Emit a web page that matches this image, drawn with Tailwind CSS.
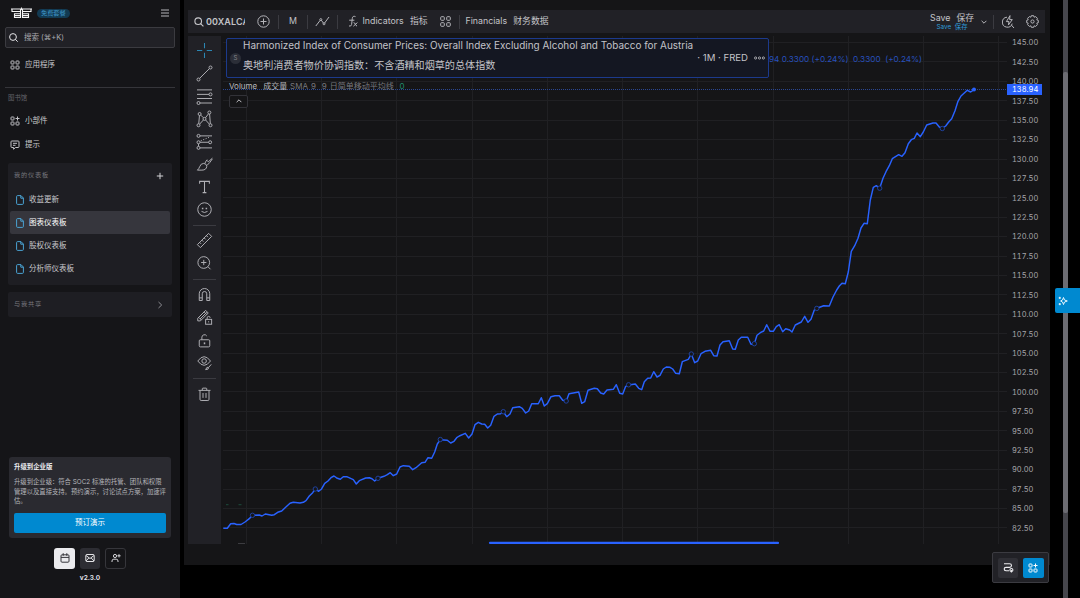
<!DOCTYPE html>
<html lang="zh-CN">
<head>
  <meta charset="UTF-8" />
  <meta name="viewport" content="width=device-width, initial-scale=1.0" />
  <title>图表仪表板</title>
  <script src="https://cdn.jsdelivr.net/npm/@tailwindcss/browser@4"></script>
  <style>
    body {
      font-family: Inter, 'Noto Sans CJK SC', sans-serif;
    }
  </style>
</head>
<body class="relative flex w-[1080px] h-[598px] overflow-hidden bg-black text-[#c9c9cd]">

  <!-- Sidebar -->
  <aside class="flex flex-col shrink-0 w-[180px] h-full bg-[#151518] text-[7.5px] leading-none">
    <div class="flex items-center h-[26px] pl-[11px] pr-[10px]">
      <svg class="w-[21px] h-[12px]" viewBox="0 0 21 12" fill="none" stroke="#f4f4f5" stroke-width="1.1">
        <path d="M0 2H9.5V4.500H1V2M9.500 6.700H3.500V10.500H9.500V6.700M3.500 8.600H9.500M21 2H11.500V4.500H20V2M11.500 6.700H17.500V10.500H11.500V6.700M17.500 8.600H11.500M9.500 4.500V6.700M11.500 4.500V6.700M10.500 .5V3" />
      </svg>
      <span class="flex items-center h-[9px] ml-[5px] px-[4px] rounded-full bg-[#123a52] text-[#3f97c9] text-[6.2px]">免费套餐</span>
      <svg class="w-[10px] h-[8px] ml-auto" viewBox="0 0 10 8" stroke="#b5b5b9" stroke-width="1"><path d="M1 1H9M1 4H9M1 7H9" /></svg>
    </div>

    <div class="flex items-center gap-[6px] h-[21px] mt-[1px] mx-[5px] pl-[3px] rounded-[2px] border border-[#3b3b40] bg-[#212126] text-[#a9a9ae]">
      <svg class="w-[9px] h-[9px]" viewBox="0 0 9 9" fill="none" stroke="#e4e4e7" stroke-width="1"><circle cx="4" cy="4" r="3.4" /><path d="M6.5 6.5L8.7 8.7" /></svg>
      <span>搜索 (⌘+K)</span>
    </div>

    <a class="flex items-center gap-[5px] h-[33px] pl-[10px]">
      <svg class="w-[10px] h-[10px]" viewBox="0 0 10 10" fill="none" stroke="#c4c4c8" stroke-width="1"><rect x="1" y="1" width="3" height="3" rx=".6" /><rect x="6" y="1" width="3" height="3" rx=".6" /><rect x="1" y="6" width="3" height="3" rx=".6" /><rect x="6" y="6" width="3" height="3" rx=".6" /></svg>
      <span>应用程序</span>
    </a>

    <div class="h-px mt-[6px] mx-[5px] bg-[#35353a]"></div>
    <div class="flex items-center h-[21px] pl-[8px] text-[6.4px] text-[#626268]">图书馆</div>

    <a class="flex items-center gap-[5px] h-[24px] pl-[10px]">
      <svg class="w-[10px] h-[10px]" viewBox="0 0 10 10" fill="none" stroke="#c4c4c8" stroke-width="1"><rect x="1" y="1" width="3" height="3" rx=".6" /><path d="M7.5 .5V4.5M5.5 2.5H9.5" /><rect x="1" y="6" width="3" height="3" rx=".6" /><rect x="6" y="6" width="3" height="3" rx=".6" /></svg>
      <span>小部件</span>
    </a>
    <a class="flex items-center gap-[5px] h-[24px] pl-[10px]">
      <svg class="w-[10px] h-[10px]" viewBox="0 0 10 10" fill="none" stroke="#c4c4c8" stroke-width="1"><path d="M1.8 1H8.2Q9 1 9 1.8V6.7Q9 7.5 8.2 7.5H5.5L3.6 9.2V7.5H1.8Q1 7.5 1 6.7V1.8Q1 1 1.8 1ZM3 3.3H7M3 5.3H5.5" /></svg>
      <span>提示</span>
    </a>

    <!-- My dashboards -->
    <div class="mt-[6px] mx-[8px] px-[2px] pb-[5px] rounded-[2px] bg-[#1e1e23]">
      <div class="flex items-center justify-between h-[25px] pl-[4px] pr-[6px] text-[6.2px] text-[#77777d] tracking-[.8px]">
        <span>我的仪表板</span>
        <svg class="w-[8px] h-[8px]" viewBox="0 0 8 8" stroke="#d4d4d8" stroke-width="1"><path d="M4 .8V7.2M.8 4H7.2" /></svg>
      </div>
      <a class="flex items-center gap-[5px] h-[23px] pl-[6px] rounded-[2px]">
        <svg class="w-[8px] h-[10px]" viewBox="0 0 8 10" fill="none" stroke="#4aa3d3" stroke-width="1"><path d="M5 .6H1.6Q.6 .6 .6 1.6V8.4Q.6 9.4 1.6 9.4H6.4Q7.4 9.4 7.4 8.4V3ZM4.8 .8V3.2H7.2" /></svg>
        <span>收益更新</span>
      </a>
      <a class="flex items-center gap-[5px] h-[23px] pl-[6px] rounded-[2px] bg-[#36363d] text-white">
        <svg class="w-[8px] h-[10px]" viewBox="0 0 8 10" fill="none" stroke="#4aa3d3" stroke-width="1"><path d="M5 .6H1.6Q.6 .6 .6 1.6V8.4Q.6 9.4 1.6 9.4H6.4Q7.4 9.4 7.4 8.4V3ZM4.8 .8V3.2H7.2" /></svg>
        <span>图表仪表板</span>
      </a>
      <a class="flex items-center gap-[5px] h-[23px] pl-[6px] rounded-[2px]">
        <svg class="w-[8px] h-[10px]" viewBox="0 0 8 10" fill="none" stroke="#4aa3d3" stroke-width="1"><path d="M5 .6H1.6Q.6 .6 .6 1.6V8.4Q.6 9.4 1.6 9.4H6.4Q7.4 9.4 7.4 8.4V3ZM4.8 .8V3.2H7.2" /></svg>
        <span>股权仪表板</span>
      </a>
      <a class="flex items-center gap-[5px] h-[23px] pl-[6px] rounded-[2px]">
        <svg class="w-[8px] h-[10px]" viewBox="0 0 8 10" fill="none" stroke="#4aa3d3" stroke-width="1"><path d="M5 .6H1.6Q.6 .6 .6 1.6V8.4Q.6 9.4 1.6 9.4H6.4Q7.4 9.4 7.4 8.4V3ZM4.8 .8V3.2H7.2" /></svg>
        <span>分析师仪表板</span>
      </a>
    </div>

    <div class="flex items-center justify-between h-[25px] mt-[7px] mx-[8px] pl-[6px] pr-[9px] rounded-[2px] bg-[#1e1e23] text-[6.2px] text-[#77777d] tracking-[.8px]">
      <span>与我共享</span>
      <svg class="w-[6px] h-[8px]" viewBox="0 0 6 8" fill="none" stroke="#8e8e94" stroke-width="1"><path d="M1.5 1L4.7 4L1.5 7" /></svg>
    </div>

    <!-- Upgrade card -->
    <div class="mt-auto mx-[9px] px-[5px] pt-[5px] pb-[5px] h-[81px] rounded-[3px] bg-[#2a2a30]">
      <div class="h-[10px] text-[6.4px] leading-[10px] font-bold text-[#ededf0]">升级到企业版</div>
      <p class="mt-[6px] h-[29px] text-[6.34px] leading-[9.5px] text-[#b4b4b9] whitespace-nowrap">升级到企业级：符合 SOC2 标准的托管、团队和权限<br />管理以及直接支持。预约演示，讨论试点方案，加速评<br />估。</p>
      <button class="flex items-center justify-center w-full h-[20px] mt-[6px] rounded-[2px] bg-[#0089d0] text-[7.5px] text-white">预订演示</button>
    </div>

    <div class="flex justify-center gap-[5px] mt-[10px]">
      <button class="flex items-center justify-center w-[20.5px] h-[20.5px] rounded-[3px] bg-[#ebebee]">
        <svg class="w-[10px] h-[10px]" viewBox="0 0 10 10" fill="none" stroke="#35353a" stroke-width="1"><rect x="1" y="1.8" width="8" height="7.4" rx="1" /><path d="M1 4.4H9M3.2 .2V2.8M6.8 .2V2.8" /></svg>
      </button>
      <button class="flex items-center justify-center w-[20.5px] h-[20.5px] rounded-[3px] bg-[#2d2d33]">
        <svg class="w-[10px] h-[10px]" viewBox="0 0 10 10" fill="none" stroke="#e4e4e7" stroke-width="1"><rect x=".8" y="1.5" width="8.4" height="7" rx="1" /><path d="M1 2.5L5 5.5L9 2.5M1 8L3.8 5M9 8L6.2 5" /></svg>
      </button>
      <button class="flex items-center justify-center w-[20.5px] h-[20.5px] rounded-[3px] border border-[#36363b]">
        <svg class="w-[10px] h-[10px]" viewBox="0 0 10 10" fill="none" stroke="#d4d4d8" stroke-width="1"><circle cx="4" cy="3" r="1.6" /><path d="M1 9V8Q1 6.2 2.8 6.2H5.2Q7 6.2 7 8V9M8 1.2V4.4M6.4 2.8H9.6" /></svg>
      </button>
    </div>
    <div class="h-[29.5px] pt-[6.5px] text-center text-[6.5px] font-bold text-[#dedee2]">v2.3.0</div>
  </aside>

  <!-- Chart widget -->
  <main class="flex flex-col shrink-0 w-[866px] h-[565px] ml-[4px] pt-[10px] pl-[4px] pr-[5px] bg-[#151517]">

    <!-- Top toolbar -->
    <div class="flex items-center shrink-0 h-[23px] pl-[6px] pr-[6px] bg-[#212126] text-[8.8px] leading-none text-[#c3c3c8] whitespace-nowrap">
      <svg class="w-[10px] h-[10px] shrink-0" viewBox="0 0 10 10" fill="none" stroke="#c8c8cc" stroke-width="1.1"><circle cx="4.2" cy="4.2" r="3.3" /><path d="M6.6 6.6L9.4 9.4" /></svg>
      <span class="w-[39px] ml-[2px] overflow-hidden font-semibold text-[9px] tracking-[.1px] leading-[12px]">00XALCA</span>
      <svg class="w-[13px] h-[13px] ml-[11.500px]" viewBox="0 0 13 13" fill="none" stroke="#b4b4b9" stroke-width="1"><circle cx="6.5" cy="6.5" r="5.7" /><path d="M6.5 3.5V9.5M3.5 6.5H9.5" /></svg>
      <i class="w-px h-[14px] ml-[8.5px] bg-[#3b3b41]"></i>
      <span class="w-[8px] ml-[10px]">M</span>
      <i class="w-px h-[14px] ml-[10px] bg-[#3b3b41]"></i>
      <svg class="w-[15px] h-[11px] ml-[7px]" viewBox="0 0 15 11" fill="none" stroke="#b4b4b9" stroke-width="1"><path d="M.8 10L5.3 4.2M6.3 4.2L8.5 7.2M9.6 7L14 1" /><circle cx="5.8" cy="3.6" r="1" /><circle cx="9" cy="7.8" r="1" /></svg>
      <i class="w-px h-[14px] ml-[7px] bg-[#3b3b41]"></i>
      <svg class="w-[10px] h-[13px] ml-[9.500px]" viewBox="0 0 10 13" fill="none" stroke="#b4b4b9" stroke-width="1"><path d="M7.5 1.6Q4.6 .4 4.3 3.4L3.6 9.5Q3.3 11.6 1 11M1.2 5.2H6.4M5.6 7.6Q6.8 7.6 7.3 9.2T9 11M9.4 7.6L5.4 11.2" /></svg>
      <span class="flex justify-between w-[65px] ml-[5px]"><span>Indicators</span><span>指标</span></span>
      <svg class="w-[11px] h-[11px] ml-[12px]" viewBox="0 0 11 11" fill="none" stroke="#b4b4b9" stroke-width="1"><rect x=".7" y=".7" width="3.6" height="3.6" rx=".8" /><rect x="6.7" y=".7" width="3.6" height="3.6" rx=".8" /><rect x=".7" y="6.7" width="3.6" height="3.6" rx=".8" /><rect x="6.7" y="6.7" width="3.6" height="3.6" rx=".8" /></svg>
      <i class="w-px h-[14px] ml-[8px] bg-[#3b3b41]"></i>
      <span class="flex justify-between w-[83px] ml-[6px]"><span>Financials</span><span>财务数据</span></span>
      <div class="flex flex-col items-center gap-[1px] mt-[2px] ml-auto">
        <span class="flex gap-[6px]"><span>Save</span><span>保存</span></span>
        <span class="flex gap-[3.500px] text-[6.4px] text-[#2f9bd8]"><span>Save</span><span>保存</span></span>
      </div>
      <svg class="w-[6px] h-[4px] ml-[7px]" viewBox="0 0 6 4" fill="none" stroke="#b4b4b9" stroke-width="1"><path d="M.6 .8L3 3.2L5.4 .8" /></svg>
      <i class="w-px h-[14px] ml-[6px] bg-[#3b3b41]"></i>
      <svg class="w-[13px] h-[14px] ml-[8px]" viewBox="0 0 13 14" fill="none" stroke="#b4b4b9" stroke-width="1"><path d="M5 2.2A5 5 0 1 0 10.2 8.6M9.3 10L12 13M8 .6L4.4 6.6H7L6.4 10L10.3 4.6H7.6Z" /></svg>
      <svg class="w-[13px] h-[13px] ml-[11px]" viewBox="0 0 13 13" fill="none" stroke="#b4b4b9" stroke-width="1"><path d="M5.3 .7H7.7L8.1 2.2L9.7 1.6L11.4 3.3L10.8 4.9L12.3 5.3V7.7L10.8 8.1L11.4 9.7L9.7 11.4L8.1 10.8L7.7 12.3H5.3L4.9 10.8L3.3 11.4L1.6 9.7L2.2 8.1L.7 7.7V5.3L2.2 4.9L1.6 3.3L3.3 1.6L4.9 2.2Z" /><circle cx="6.5" cy="6.5" r="1.6" /></svg>
    </div>

    <div class="flex h-[508px] mt-[3px]">
      <!-- Drawing tools -->
      <div class="flex flex-col items-center shrink-0 w-[33px] h-full pt-[3px] bg-[#212126]">
        <svg class="w-[21px] h-[23px]" viewBox="0 0 28 28" fill="none" stroke="#2b86b3" stroke-width="1.4"><path d="M14 4V11M14 17V24M4 14H11M17 14H24" /></svg>
        <svg class="w-[21px] h-[23px]" viewBox="0 0 28 28" fill="none" stroke="#b0b0b5" stroke-width="1.3"><circle cx="22" cy="6" r="2" /><circle cx="6" cy="22" r="2" /><path d="M7.5 20.5L20.5 7.5" /></svg>
        <svg class="w-[21px] h-[22.500px]" viewBox="0 0 28 28" fill="none" stroke="#b0b0b5" stroke-width="1.3"><path d="M4 5.5H24M4 11.5H20M4 17H24M8 23H24" /><circle cx="22" cy="11.5" r="2" /><circle cx="6" cy="23" r="2" /></svg>
        <svg class="w-[21px] h-[22.500px]" viewBox="0 0 28 28" fill="none" stroke="#b0b0b5" stroke-width="1.3"><circle cx="7.5" cy="7" r="2" /><circle cx="20.5" cy="5" r="2" /><circle cx="14" cy="13.5" r="2" /><circle cx="6" cy="22" r="2" /><circle cx="22" cy="22" r="2" /><path d="M7.3 9L6.3 20M9 8.5L12.5 12M15.3 12L19.3 6.8M20.8 7L21.8 20M7.5 20.5L12.5 15M15.5 15L20.5 20.5" /></svg>
        <svg class="w-[21px] h-[23px]" viewBox="0 0 28 28" fill="none" stroke="#b0b0b5" stroke-width="1.3"><circle cx="6" cy="6.5" r="2" /><circle cx="6" cy="15" r="2" /><circle cx="6" cy="22.5" r="2" /><circle cx="21.500" cy="15" r="2" /><path d="M8 6.500H24M8 15H19.500M8 22.500H24M6 17V20.500" /><path d="M9 13L20 8.500" stroke-dasharray="1.500 2" /></svg>
        <svg class="w-[21px] h-[23px]" viewBox="0 0 28 28" fill="none" stroke="#b0b0b5" stroke-width="1.3"><path d="M4.500 21.500Q6.500 20 7.500 17Q9 12.500 13 12.500Q17 13 17 16.500Q16.500 21.500 10.500 21.500ZM14.500 12.500Q16 9 17.500 7.500M17 15.500Q21 12 24.500 6.500M17.500 8.500L19 10.500L24.500 5.500" /></svg>
        <svg class="w-[21px] h-[22px]" viewBox="0 0 28 28" fill="none" stroke="#b0b0b5" stroke-width="1.4"><path d="M7.500 9.500V6.500H20.500V9.500M14 6.500V21.500M11.500 21.500H16.500" /></svg>
        <svg class="w-[21px] h-[23px]" viewBox="0 0 28 28" fill="none" stroke="#b0b0b5" stroke-width="1.3"><circle cx="14" cy="14" r="9" /><path d="M10 16.500Q14 19.500 18 16.500" /><path d="M11.500 11.500V13.500M16.500 11.500V13.500" stroke-width="2" /></svg>
        <i class="w-[23px] h-px my-[3.5px] bg-[#3b3b41]"></i>
        <svg class="w-[21px] h-[23px]" viewBox="0 0 28 28" fill="none" stroke="#b0b0b5" stroke-width="1.3"><path d="M19.500 4.500L23.500 8.500L8.500 23.500L4.500 19.500ZM7.500 16.500L9.500 18.500M10.500 13.500L12.500 15.500M13.500 10.500L15.500 12.500M16.500 7.500L18.500 9.500" /></svg>
        <svg class="w-[21px] h-[22.500px]" viewBox="0 0 28 28" fill="none" stroke="#b0b0b5" stroke-width="1.3"><circle cx="13" cy="13" r="7.800" /><path d="M18.500 18.500L22 22M13 9.500V16.500M9.500 13H16.500" /></svg>
        <i class="w-[23px] h-px mt-[4px] mb-[3.500px] bg-[#3b3b41]"></i>
        <svg class="w-[21px] h-[23px]" viewBox="0 0 28 28" fill="none" stroke="#b0b0b5" stroke-width="1.3"><path d="M7 22V13A7 7 0 0 1 21 13V22H17V13A3 3 0 0 0 11 13V22ZM7 18.500H11M17 18.500H21" /></svg>
        <svg class="w-[21px] h-[23px]" viewBox="0 0 28 28" fill="none" stroke="#b0b0b5" stroke-width="1.3"><path d="M5 18.500V15L15.500 4.500L19 8L8.500 18.500ZM6.500 14L10 17.500M8 16L17 7M13.500 6.500L17 10" /><rect x="15.500" y="16.500" width="8" height="6.500" /><path d="M17.500 16.500V14.500A2 2 0 0 1 21.500 14.500M19.500 19V20.500" /></svg>
        <svg class="w-[21px] h-[23px]" viewBox="0 0 28 28" fill="none" stroke="#b0b0b5" stroke-width="1.3"><rect x="7" y="13" width="14" height="9.500" rx="1.500" /><path d="M10.500 13V9.500A3.500 3.500 0 0 1 17 8" /><path d="M14 16.500V19" stroke-width="2" /></svg>
        <svg class="w-[21px] h-[22.500px]" viewBox="0 0 28 28" fill="none" stroke="#b0b0b5" stroke-width="1.3"><path d="M5 11Q13.500 -.5 22 11Q13.500 22.500 5 11Z" /><circle cx="13.500" cy="11" r="3" /><path d="M15.500 22.500Q17 18 19.500 19.500Q20 22.500 15.500 22.500ZM20 19L23 15.500" /></svg>
        <i class="w-[23px] h-px mt-[3px] mb-[4px] bg-[#3b3b41]"></i>
        <svg class="w-[21px] h-[23px]" viewBox="0 0 28 28" fill="none" stroke="#b0b0b5" stroke-width="1.3"><path d="M6 8.500H22M11 8.500V6.500Q11 5.500 12 5.500H16Q17 5.500 17 6.500V8.500M8 8.500V20.500Q8 22 9.500 22H18.500Q20 22 20 20.500V8.500M12 12V18.500M16 12V18.500" /></svg>
      </div>

      <!-- Chart -->
      <div class="relative w-[824px] h-full">
        <svg class="block w-[824px] h-[508px]" viewBox="221 36 824 508" fill="none">
          <path stroke="#202023" d="M223 42.5H1007M223 61.500H1007M223 81.500H1007M223 100.500H1007M223 120.500H1007M223 139.500H1007M223 159.500H1007M223 178.500H1007M223 197.500H1007M223 217.500H1007M223 236.500H1007M223 256.500H1007M223 275.500H1007M223 294.500H1007M223 314.500H1007M223 333.500H1007M223 353.500H1007M223 372.500H1007M223 391.500H1007M223 411.500H1007M223 430.500H1007M223 450.500H1007M223 469.500H1007M223 489.500H1007M223 508.500H1007M223 527.500H1007" />
          <path stroke="#202023" d="M246.500 36V544M321.500 36V544M396.500 36V544M472.500 36V544M547.500 36V544M622.500 36V544M697.500 36V544M773.500 36V544M848.500 36V544M923.500 36V544M998.500 36V544" />
          <path stroke="#2a4794" stroke-dasharray="1 1" d="M223 89.500H1007" />
          <polyline stroke="#2962ff" stroke-width="1.45" stroke-linejoin="round" points="223.3,528.3 227.3,528.3 230.7,523.7 234,523.5 236.7,524.5 241,524.5 245,522 249.3,518.7 252.3,515.3 259.3,515 262,516 265.3,514 271.7,515.3 274.3,514.7 277.7,512.3 281.7,511 286.7,506.3 290,503.3 293.3,502.3 300,503 303.3,502.3 306,500.7 309.3,496 312.7,492.7 315.3,489 318.7,491.3 321.3,489.3 324.7,483.3 328,481 331,477.7 334,476 337.3,478.3 340.3,479.3 343.3,476.7 346.7,476.7 353.3,479.7 356.3,484 359.3,480.7 365.7,478 369.3,477.7 372,478.7 374.7,481 378,478.3 384,476.3 387.3,474.7 390.3,472.7 393.3,475.7 396.7,474 400,467 403.3,465.7 409.3,466.3 412.7,469.7 416,467.7 421.7,462.7 425,462.3 428,457.7 431.7,458.3 434.7,452 437.3,444 440.3,439.7 447.3,440.3 450.7,443 454,441.3 456.7,437.7 459.3,436 465.3,433.3 468.7,438 472,434 475,424.7 478.3,422.3 481.7,424 484.7,424.3 487.7,428 490.7,425.3 494,416.3 497.3,414 500.7,413.7 503.3,411.7 506.7,416.7 510,414 512.7,407.7 519.3,406.7 522.3,408.3 525.7,413 528.7,411 531.7,403.7 538.3,403.7 541.3,397.7 544.3,406 547.3,403.7 551,396.7 555,395.7 559.3,395.7 562.7,400.3 566.3,401 569,393.7 573.3,393 578.7,392 581.7,403.3 584.7,401.7 588,390.3 594.3,388.3 597.3,388.7 600.7,393 603.7,394 607,390 613.3,389.3 616.3,384.7 619.7,393.3 622.7,394 625.7,386.3 628.7,385 635.3,384 638.7,388.3 641.7,389.7 644.3,381.7 647.7,378.3 650.7,378 653.7,371.7 657,377 660,375.3 663.3,369 666.3,367 670,367.3 672.7,369 675.7,373.3 679.3,373.7 682.3,361.7 688.3,359.3 691.3,354 694.7,362.7 697.7,361 701,353.7 705,351.3 710.7,350.3 713.7,355.7 717,356 720,345 723,341.7 729.3,340.7 732.7,349 735.3,349.3 738.3,340 741.3,337.3 747.7,337.3 751,344.3 754.3,343.7 757,335.3 760.3,332.7 763.7,331 766.7,324.7 770,331.3 773.3,331.3 776.3,326.7 779.3,324.7 782.7,331.7 785.7,328.7 789.7,330 792,332 795.3,325 801.3,322 804.7,316.3 808,322.3 811,319.3 814.3,310 817,308.3 823.7,305.7 829.3,306 833,297 836.7,290 839.3,286 842,283.3 845.3,283.7 848.3,272 851.3,251.3 854.7,245.7 858,238.3 861,228 864,223.3 867.3,223.7 870.3,200 873.3,187.3 876.3,185.7 879.7,188.3 883,178.3 886,171.7 889.3,165.7 892.3,158.7 898.7,154.7 902,156.3 905,152.7 908.3,143.7 911.3,139.7 914.3,138.3 917,133 920.3,136.7 923.3,132 926.7,125 933,123 936,123 939.3,127 942.3,128.3 945.7,126 948.7,122 951.7,118.7 955,110.7 958,101.3 961,96 967.3,90.3 970.7,92 974,89.7" />
          <g fill="#151517" stroke="#1f429f">
            <circle cx="252.5" cy="515.3" r="2.2" /><circle cx="315.3" cy="489" r="2.2" /><circle cx="378" cy="478.3" r="2.2" /><circle cx="440.3" cy="439.5" r="2.2" /><circle cx="503.3" cy="411.7" r="2.2" /><circle cx="566.2" cy="401" r="2.2" /><circle cx="628.6" cy="384.8" r="2.2" /><circle cx="691.3" cy="354" r="2.2" /><circle cx="754.300" cy="343.700" r="2.2" /><circle cx="816.800" cy="308.400" r="2.2" /><circle cx="879.700" cy="188.200" r="2.2" /><circle cx="942.300" cy="128.500" r="2.2" />
          </g>
          <circle cx="974" cy="89.600" r="2" fill="#2962ff" />
          <path stroke="#1c4a3c" d="M226 504.700H228.500M238.500 504.700H241.500" />
          <path stroke="#3c3c40" d="M238 543.500H245" />
          <path stroke="#2962ff" stroke-width="2.200" stroke-linecap="round" d="M490 542.900H778" />
        </svg>

        <!-- Price axis -->
        <div class="absolute top-[-2.6px] right-0 flex flex-col w-[33px] text-[7.5px] leading-[19.4px] tabular-nums text-[#a5a5aa]">
          <span>145.00</span><span>142.50</span><span>140.00</span><span>137.50</span><span>135.00</span><span>132.50</span><span>130.00</span><span>127.50</span><span>125.00</span><span>122.50</span><span>120.00</span><span>117.50</span><span>115.00</span><span>112.50</span><span>110.00</span><span>107.50</span><span>105.00</span><span>102.50</span><span>100.00</span><span>97.50</span><span>95.00</span><span>92.50</span><span>90.00</span><span>87.50</span><span>85.00</span><span>82.50</span>
        </div>
        <div class="absolute top-[48px] left-[786px] w-[35px] h-[11px] pl-[5px] bg-[#2962ff] text-[7.5px] leading-[11px] tabular-nums text-white">138.94</div>

        <!-- Legend -->
        <div class="absolute top-[2px] left-[5px] flex items-center w-[543px] h-[40px] pl-[3px] pr-[3px] rounded-[2px] border border-[#1c3a8c] bg-[#141722] text-[#c3c3c8] leading-none whitespace-nowrap">
          <span class="flex items-center justify-center w-[11px] h-[11px] rounded-full bg-[#2b2e38] text-[6px] text-[#85858b]">S</span>
          <div class="flex flex-col justify-between h-[29px] ml-[2px] -mt-[5px] text-[9.95px]">
            <span>Harmonized Index of Consumer Prices: Overall Index Excluding Alcohol and Tobacco for Austria</span>
            <span class="text-[10.100px]">奥地利消费者物价协调指数：不含酒精和烟草的总体指数</span>
          </div>
          <span class="ml-auto text-[9.600px]">· 1M · FRED</span>
          <svg class="w-[11px] h-[4px] ml-[6px]" viewBox="0 0 11 4" fill="none" stroke="#c3c3c8" stroke-width=".8"><circle cx="1.600" cy="2" r="1.100" /><circle cx="5.500" cy="2" r="1.100" /><circle cx="9.400" cy="2" r="1.100" /></svg>
        </div>
        <div class="absolute top-[18px] left-[548px] text-[8.200px] leading-[10px] text-[#2750bd] whitespace-pre">94 0.3300 (+0.24%)  0.3300  (+0.24%)</div>
        <div class="absolute top-[45px] left-[8px] text-[8px] leading-[11px] [word-spacing:.7px] text-[#77777d] whitespace-pre"><span class="text-[#b8b8bd]">Volume  成交量</span> SMA 9  9 日简单移动平均线  <span class="text-[#1f8a6b]">0</span></div>
        <div class="absolute top-[58.500px] left-[8px] flex items-center justify-center w-[19px] h-[13px] rounded-[2px] border border-[#323238] bg-[#151517]">
          <svg class="w-[6px] h-[4px]" viewBox="0 0 6 4" fill="none" stroke="#c3c3c8" stroke-width="1"><path d="M.6 3.200L3 .8L5.400 3.200" /></svg>
        </div>
      </div>
    </div>
  </main>

  <!-- Page scrollbar -->
  <div class="w-[4.500px] h-full ml-[13.300px] pt-[72px] bg-[#46464c]">
    <div class="h-[441px] rounded-[2px] bg-[#6c6c72]"></div>
  </div>

  <!-- Floating buttons -->
  <button class="absolute top-[288px] right-0 flex items-center w-[25px] h-[25px] pl-[3px] rounded-l-[2px] bg-[#0089d0]">
    <svg class="w-[10px] h-[10px]" viewBox="0 0 10 10" fill="none" stroke="#ffffff" stroke-width=".9"><path d="M5.500 1.500L6.500 4L9.300 5L6.500 6L5.500 8.500L4.500 6L2.600 5L4.500 4ZM1.800 .8V3M.7 1.900H2.900M1.800 7V9.200M.7 8.100H2.900" /></svg>
  </button>
  <div class="absolute left-[992px] top-[552px] flex items-center gap-[5px] w-[57px] h-[31px] pl-[5px] rounded-[2px] border border-[#3b3b41] bg-[#212126]">
    <button class="flex items-center justify-center w-[20px] h-[20px] rounded-[2px] bg-[#2f2f35]">
      <svg class="w-[11px] h-[11px]" viewBox="0 0 11 11" fill="none" stroke="#ededf0" stroke-width="1.100"><path d="M1 1.800H6.500Q8.500 1.800 8.500 3.600T6.500 5.400H3Q1.200 5.400 1.200 7.100T3 8.800H6" /><circle cx="8.400" cy="8" r="1.500" /><path d="M8.400 8V10.500" /></svg>
    </button>
    <button class="flex items-center justify-center w-[20.500px] h-[20px] rounded-[2px] bg-[#0089d0]">
      <svg class="w-[10px] h-[10px]" viewBox="0 0 10 10" fill="none" stroke="#ffffff" stroke-width="1"><rect x="1" y="1" width="3" height="3" rx=".6" /><path d="M7.500 .5V4.500M5.500 2.500H9.500" /><rect x="1" y="6" width="3" height="3" rx=".6" /><rect x="6" y="6" width="3" height="3" rx=".6" /></svg>
    </button>
  </div>

</body>
</html>
